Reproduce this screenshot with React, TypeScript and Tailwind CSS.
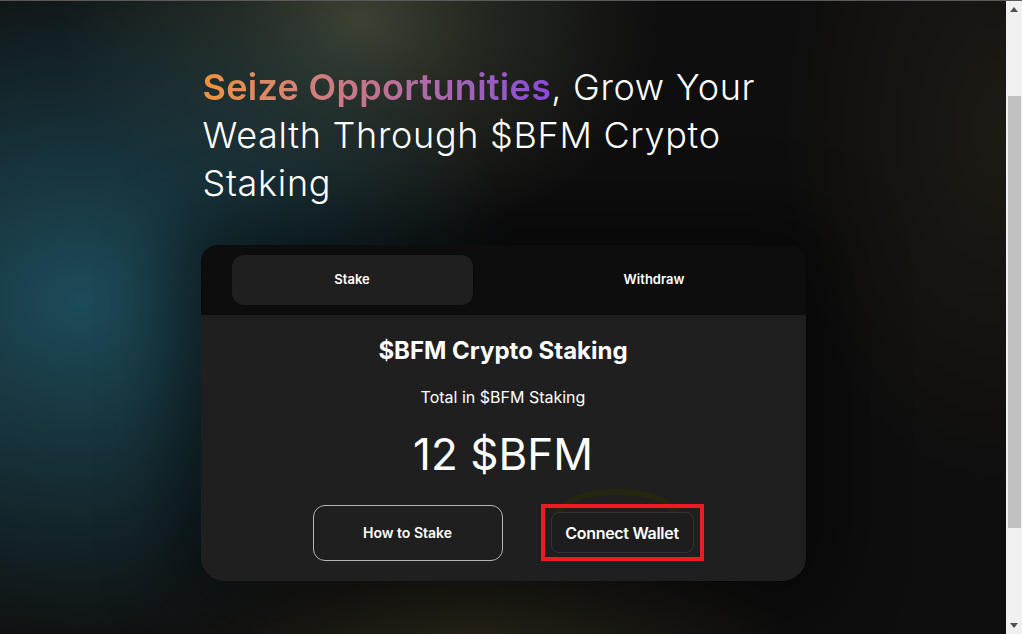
import React from 'react';

const sans = { fontFamily: 'Inter, "Noto Sans", sans-serif' };

const Scrollbar: React.FC = () => (
  <div className="w-[16px] h-full bg-[#f0f0f0] flex flex-col shrink-0">
    <div className="h-[17px] flex items-center justify-center">
      <svg width="8" height="5" viewBox="0 0 8 5">
        <path d="M4 0L8 5H0z" fill="#505050" />
      </svg>
    </div>
    <div className="flex-1 relative">
      <div className="absolute left-[2px] top-[78px] w-[13px] h-[432px] bg-[#c1c1c1]" />
    </div>
    <div className="h-[17px] flex items-center justify-center">
      <svg width="8" height="5" viewBox="0 0 8 5">
        <path d="M0 0H8L4 5z" fill="#505050" />
      </svg>
    </div>
  </div>
);

const App: React.FC = () => {
  return (
    <div className="w-full h-[634px] flex border-t border-[#5a5a5a] overflow-hidden bg-[#0e0e0e]" style={sans}>
      <main className="flex-1 relative overflow-hidden bg-[radial-gradient(ellipse_440px_360px_at_80px_300px,#1d4b59_0%,rgba(29,75,89,0.65)_35%,transparent_100%),radial-gradient(ellipse_300px_230px_at_360px_20px,#3b4233_0%,rgba(59,66,51,0.5)_40%,transparent_100%),radial-gradient(ellipse_320px_170px_at_470px_650px,#2a2618_0%,transparent_100%),radial-gradient(ellipse_220px_360px_at_1000px_130px,#1d1a14_0%,transparent_100%)]">
        <div className="flex flex-col items-center">
          <div className="w-[605px] pt-[62px]">
            <h1 className="text-[36px] leading-[48px] font-light text-white tracking-[0.7px] pl-[2px]">
              <span className="font-semibold tracking-[0.3px] bg-gradient-to-r from-[#f0933a] via-[#c07390] to-[#8a48dc] bg-clip-text text-transparent">
                Seize Opportunities
              </span>
              , Grow Your Wealth Through $BFM Crypto Staking
            </h1>

            <div className="mt-[38px] rounded-t-[16px] rounded-b-[24px] overflow-hidden shadow-[0_0_70px_30px_rgba(0,0,0,0.45)]">
              <div className="bg-[#0d0d0d] h-[70px] px-[31px] py-[10px] grid grid-cols-2 gap-[61px]">
                <button className="rounded-[12px] bg-[#1f1f1f] text-white text-[13px] font-semibold">Stake</button>
                <button className="rounded-[12px] text-white text-[13px] font-semibold">Withdraw</button>
              </div>

              <div className="bg-[#1f1f1f] pt-[20px] pb-[20px] flex flex-col items-center text-white">
                <h2 className="text-[24px] leading-[32px] font-bold">$BFM Crypto Staking</h2>
                <p className="mt-[19px] text-[16px] leading-[22px]">Total in $BFM Staking</p>
                <p className="mt-[20px] text-[44px] leading-[52px] font-normal">12 $BFM</p>

                <div className="mt-[24px] flex items-center gap-[38px] pl-[10px] relative">
                  <button className="w-[190px] h-[56px] rounded-[12px] border border-[#b5b5b5] text-[14px] font-semibold">
                    How to Stake
                  </button>
                  <div className="relative">
                    <svg className="absolute left-[4px] -top-[22px]" width="140" height="40" viewBox="0 0 140 40">
                      <path d="M10 36C14 20 40 10 70 10C100 10 122 16 130 30" fill="none" stroke="#262510" strokeWidth="6" strokeLinecap="round" />
                    </svg>
                    <div className="relative border-4 border-[#ec1c24] px-[6px] py-[4px]">
                      <button className="w-[143px] h-[41px] rounded-[8px] border border-[#333] bg-[#1d1d1d] text-[16px] font-semibold tracking-[-0.3px]">
                        Connect Wallet
                      </button>
                    </div>
                  </div>
                </div>
              </div>
            </div>
          </div>
        </div>
      </main>
      <Scrollbar />
    </div>
  );
};

export default App;
